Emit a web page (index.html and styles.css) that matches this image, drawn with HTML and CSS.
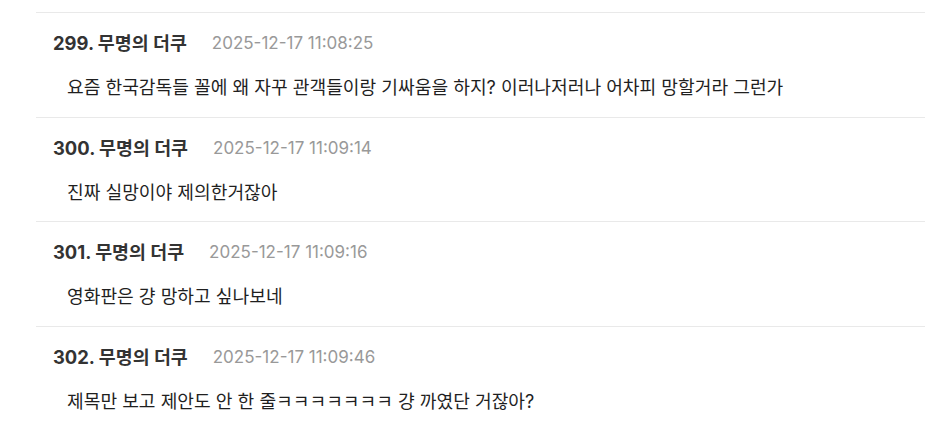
FILE: index.html
```html
<!DOCTYPE html>
<html lang="ko">
<head>
<meta charset="utf-8">
<link rel="stylesheet" href="styles.css">
</head>
<body>
<div class="list">
  <div class="item">
    <div class="head"><span class="name">299. 무명의 더쿠</span><span class="date">2025-12-17 11:08:25</span></div>
    <div class="body">요즘 한국감독들 꼴에 왜 자꾸 관객들이랑 기싸움을 하지? 이러나저러나 어차피 망할거라 그런가</div>
  </div>
  <div class="item">
    <div class="head"><span class="name">300. 무명의 더쿠</span><span class="date">2025-12-17 11:09:14</span></div>
    <div class="body">진짜 실망이야 제의한거잖아</div>
  </div>
  <div class="item">
    <div class="head"><span class="name">301. 무명의 더쿠</span><span class="date">2025-12-17 11:09:16</span></div>
    <div class="body">영화판은 걍 망하고 싶나보네</div>
  </div>
  <div class="item">
    <div class="head"><span class="name">302. 무명의 더쿠</span><span class="date">2025-12-17 11:09:46</span></div>
    <div class="body">제목만 보고 제안도 안 한 줄ㅋㅋㅋㅋㅋㅋㅋ 걍 까였단 거잖아?</div>
  </div>
</div>
</body>
</html>
```
FILE: styles.css
```css
html, body {
  margin: 0;
  padding: 0;
  background: #fff;
}
body {
  font-family: Inter, "Noto Sans CJK KR", sans-serif;
  color: #222;
}
.list {
  padding: 12px 0 0 36px;
}
.item {
  border-top: 1px solid #e9e9e9;
  padding: 18px 0 16px 17px;
  height: 69.5px;
}
.head {
  display: flex;
  align-items: center;
  gap: 25px;
  line-height: 24px;
  height: 24px;
}
.name {
  font-size: 18.4px;
  font-weight: 700;
  color: #333;
}
.date {
  font-size: 17px;
  color: #999;
}
.body {
  margin-top: 20px;
  padding-left: 14px;
  font-size: 18.15px;
  line-height: 24px;
  color: #1f1f1f;
}
```
